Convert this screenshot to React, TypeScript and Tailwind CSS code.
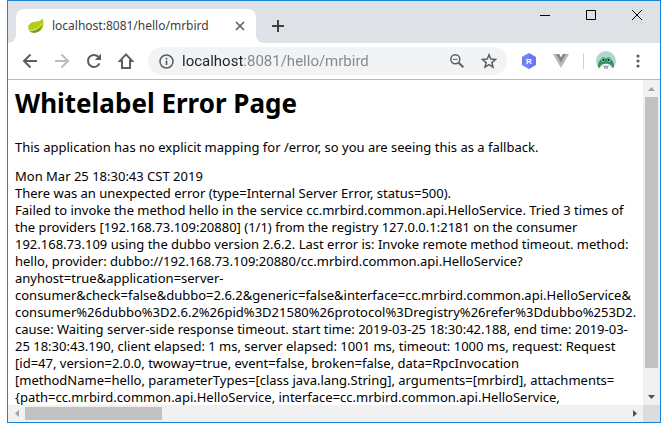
import React from "react";

const details = [
  "There was an unexpected error (type=Internal Server Error, status=500).",
  "Failed to invoke the method hello in the service cc.mrbird.common.api.HelloService. Tried 3 times of",
  "the providers [192.168.73.109:20880] (1/1) from the registry 127.0.0.1:2181 on the consumer",
  "192.168.73.109 using the dubbo version 2.6.2. Last error is: Invoke remote method timeout. method:",
  "hello, provider: dubbo://192.168.73.109:20880/cc.mrbird.common.api.HelloService?",
  "anyhost=true&application=server-",
  "consumer&check=false&dubbo=2.6.2&generic=false&interface=cc.mrbird.common.api.HelloService&",
  "consumer%26dubbo%3D2.6.2%26pid%3D21580%26protocol%3Dregistry%26refer%3Ddubbo%253D2.",
  "cause: Waiting server-side response timeout. start time: 2019-03-25 18:30:42.188, end time: 2019-03-",
  "25 18:30:43.190, client elapsed: 1 ms, server elapsed: 1001 ms, timeout: 1000 ms, request: Request",
  "[id=47, version=2.0.0, twoway=true, event=false, broken=false, data=RpcInvocation",
  "[methodName=hello, parameterTypes=[class java.lang.String], arguments=[mrbird], attachments=",
  "{path=cc.mrbird.common.api.HelloService, interface=cc.mrbird.common.api.HelloService,",
];

function IconButton({ label, className = "", children }: { label: string; className?: string; children: React.ReactNode }) {
  return (
    <button type="button" aria-label={label} className={`flex shrink-0 items-center justify-center ${className}`}>
      {children}
    </button>
  );
}

function Leaf() {
  return (
    <svg width="16" height="16" viewBox="0 0 16 16">
      <path d="M14.7 0.5c1.7 5.800.6 10.900-3.700 13-3.300 1.500-7.300 1.200-9.600-.3C-.9 9.800.1 5.800 4.300 4.300 8 3.200 12 4 14.700.5z" fill="#b5cc18" />
      <path d="M2 13.300c5-.5 9-2.300 12.300-7.300-.5 4.500-2.500 7.500-6 8.500-2.300.6-4.700.3-6.300-1.200z" fill="#6fa51d" />
      <path d="M1.500 12.700c5.500-.4 9.500-2.400 12.300-6.700" fill="none" stroke="#e3ec8c" strokeWidth="1" />
    </svg>
  );
}

function TabStrip() {
  return (
    <header className="flex h-[42px] shrink-0 items-end bg-[#dee1e6]">
      <svg width="8" height="8" viewBox="0 0 8 8" className="shrink-0">
        <path d="M8 0v8H0a8 8 0 0 0 8-8z" fill="#fff" />
      </svg>
      <div className="flex h-[34px] w-[240px] shrink-0 items-center rounded-t-lg bg-white pl-3 pr-2">
        <Leaf />
        <span className="ml-2 flex-1 whitespace-nowrap font-['Noto_Sans',sans-serif] text-xs text-[#3c4043]">localhost:8081/hello/mrbird</span>
        <IconButton label="Close tab" className="size-4">
          <svg width="10" height="10" viewBox="0 0 10 10"><path d="M1 1l8 8M9 1l-8 8" stroke="#5f6368" strokeWidth="1.7" /></svg>
        </IconButton>
      </div>
      <svg width="8" height="8" viewBox="0 0 8 8" className="shrink-0">
        <path d="M0 0v8h8a8 8 0 0 1-8-8z" fill="#fff" />
      </svg>
      <IconButton label="New tab" className="h-[34px] w-7">
        <svg width="12" height="12" viewBox="0 0 12 12"><path d="M6 0v12M0 6h12" stroke="#3c4043" strokeWidth="2" /></svg>
      </IconButton>
      <div className="ml-auto flex h-full items-start">
        <IconButton label="Minimize" className="h-7 w-[46px]">
          <svg width="10" height="10" viewBox="0 0 10 10"><path d="M0 5.500h10" stroke="#000" /></svg>
        </IconButton>
        <IconButton label="Maximize" className="h-7 w-[46px]">
          <svg width="10" height="10" viewBox="0 0 10 10"><path d="M.5.500h9v9h-9z" fill="none" stroke="#000" /></svg>
        </IconButton>
        <IconButton label="Close window" className="h-7 w-[46px]">
          <svg width="10" height="10" viewBox="0 0 10 10"><path d="M0 0l10 10M10 0L0 10" stroke="#000" /></svg>
        </IconButton>
      </div>
    </header>
  );
}

function Toolbar() {
  return (
    <nav className="flex h-[37px] shrink-0 items-center border-b border-[#b8b8b8] bg-white pl-1.5">
      <IconButton label="Back" className="size-8">
        <svg width="16" height="16" viewBox="0 0 16 16"><path d="M15 8H2.500M8.500 1.500L2 8l6.500 6.500" fill="none" stroke="#5a5e63" strokeWidth="2" /></svg>
      </IconButton>
      <IconButton label="Forward" className="size-8">
        <svg width="16" height="16" viewBox="0 0 16 16"><path d="M1 8h12.500M7.500 1.500L14 8l-6.500 6.500" fill="none" stroke="#babcbe" strokeWidth="2" /></svg>
      </IconButton>
      <IconButton label="Reload" className="size-8">
        <svg width="16" height="16" viewBox="0 0 16 16">
          <path d="M13.500 10.300A6 6 0 1 1 12.300 3.800" fill="none" stroke="#5a5e63" strokeWidth="2" />
          <path d="M15 .8V7H8.800z" fill="#5a5e63" />
        </svg>
      </IconButton>
      <IconButton label="Home" className="size-8">
        <svg width="16" height="16" viewBox="0 0 16 16"><path d="M8 1.400L1.800 8H4v7h8V8h2.200z" fill="none" stroke="#5a5e63" strokeWidth="2" /></svg>
      </IconButton>
      <div className="ml-1.5 flex h-7 min-w-0 flex-1 items-center rounded-full bg-[#f1f3f4] pl-[11px] pr-1.5">
        <svg width="15" height="15" viewBox="0 0 15 15" className="shrink-0">
          <circle cx="7.500" cy="7.500" r="6.500" fill="none" stroke="#5a5e63" strokeWidth="1.500" />
          <path d="M7.500 6.500V11M7.500 3.700v1.700" stroke="#5a5e63" strokeWidth="1.700" />
        </svg>
        <input
          type="text"
          aria-label="Address"
          defaultValue="localhost:8081/hello/mrbird"
          className="ml-2 min-w-0 flex-1 bg-[linear-gradient(to_right,#202124_61px,#80868b_61px)] bg-clip-text font-['Roboto',sans-serif] text-[15px] leading-5 text-transparent outline-none"
        />
        <IconButton label="Zoom" className="size-6">
          <svg width="14" height="14" viewBox="0 0 14 14"><circle cx="5.300" cy="5.300" r="4.500" fill="none" stroke="#5a5e63" strokeWidth="1.500" /><path d="M8.700 8.700l4.600 4.600" stroke="#5a5e63" strokeWidth="2" /><path d="M3 5.300h4.600" stroke="#5a5e63" /></svg>
        </IconButton>
        <IconButton label="Bookmark this page" className="ml-2 size-6">
          <svg width="16" height="16" viewBox="0 0 16 16"><path d="M8 1.800l1.800 4.300 4.700.4-3.600 3.100 1.100 4.600L8 11.700l-4 2.500 1.100-4.600L1.500 6.500l4.700-.4z" fill="none" stroke="#5a5e63" strokeWidth="1.500" /></svg>
        </IconButton>
      </div>
      <IconButton label="R extension" className="ml-1.5 size-8">
        <svg width="16" height="16" viewBox="0 0 16 16">
          <path d="M8 0l7 4v8l-7 4-7-4V4z" fill="#6c78ed" />
          <path d="M8 0L1 4l3 4-3 4 7 4V8z" fill="#858eff" opacity=".6" />
          <text x="8" y="11" textAnchor="middle" fontFamily="Liberation Sans" fontWeight="700" fontSize="8" fill="#fff">R</text>
        </svg>
      </IconButton>
      <IconButton label="Vue extension" className="size-8">
        <svg width="16" height="14" viewBox="0 0 16 14"><path d="M0 0h16L8 14z" fill="#b8b8b8" /><path d="M3.200 0h3L8 3.200 9.800 0h3L8 8.500z" fill="#858585" /><path d="M6.200 0h3.600L8 3.200z" fill="#fff" /></svg>
      </IconButton>
      <span className="ml-1.5 h-4 w-px bg-[#cfd1d4]" />
      <IconButton label="Profile" className="ml-1.5 size-8">
        <svg width="20" height="20" viewBox="0 0 20 20">
          <circle cx="10" cy="10" r="10" fill="#aed8ce" />
          <path d="M2 16C2 11 4 9.500 5 8c1-2.200 4-2.200 5 0 1-2.200 4-2.200 5 0 1 1.500 3 3 3 8l-3 2H5z" fill="#24965e" />
          <path d="M3.500 17.500c0-6.500 13-6.500 13 0A10 10 0 0 1 3.500 17.500z" fill="#fff" />
          <circle cx="7.200" cy="9" r="1.800" fill="#e4f2e9" /><circle cx="12.800" cy="9" r="1.800" fill="#e4f2e9" />
          <circle cx="7.400" cy="9" r="1.200" fill="#16251e" /><circle cx="12.600" cy="9" r="1.200" fill="#16251e" />
          <circle cx="4.500" cy="15" r="1" fill="#f47c48" /><circle cx="15.500" cy="15" r="1" fill="#f47c48" />
          <path d="M7.500 14.500l1 1.300 1.500-1 1.500 1 1-1.300M8 17h4" fill="none" stroke="#344b68" strokeWidth=".8" />
        </svg>
      </IconButton>
      <IconButton label="Menu" className="mr-1.5 size-8">
        <svg width="4" height="14" viewBox="0 0 4 14" fill="#5a5e63"><circle cx="2" cy="2" r="1.600" /><circle cx="2" cy="7" r="1.600" /><circle cx="2" cy="12" r="1.600" /></svg>
      </IconButton>
    </nav>
  );
}

export default function App() {
  return (
    <div className="h-screen bg-white px-[7px] pb-[7px]">
      <div className="flex h-full flex-col border border-[#1883d7]">
        <TabStrip />
        <Toolbar />
        <div className="flex min-h-0 flex-1">
          <main className="min-w-0 flex-1 overflow-hidden whitespace-nowrap pl-[7px] pt-[5px] font-['Noto_Sans',sans-serif] text-[13px] leading-[17px] text-black">
            <h1 className="text-[26px] font-bold leading-9">Whitelabel Error Page</h1>
            <p className="mt-[18px]">This application has no explicit mapping for /error, so you are seeing this as a fallback.</p>
            <div className="mt-3">Mon Mar 25 18:30:43 CST 2019</div>
            {details.map((line) => (
              <div key={line}>{line}</div>
            ))}
          </main>
          <div className="flex w-[17px] shrink-0 flex-col items-center bg-[#f1f1f1]">
            <IconButton label="Scroll up" className="h-[17px] w-full">
              <svg width="7" height="4" viewBox="0 0 7 4"><path d="M0 4l3.500-4L7 4z" fill="#a3a3a3" /></svg>
            </IconButton>
            <div className="mb-5 w-[13px] flex-1 bg-[#c1c1c1]" />
            <IconButton label="Scroll down" className="h-[17px] w-full">
              <svg width="7" height="4" viewBox="0 0 7 4"><path d="M0 0l3.500 4L7 0z" fill="#505050" /></svg>
            </IconButton>
          </div>
        </div>
        <div className="flex h-[17px] shrink-0 items-center bg-[#f1f1f1]">
          <IconButton label="Scroll left" className="size-[17px]">
            <svg width="4" height="7" viewBox="0 0 4 7"><path d="M4 0L0 3.500 4 7z" fill="#a3a3a3" /></svg>
          </IconButton>
          <div className="h-[13px] w-[137px] bg-[#c1c1c1]" />
          <IconButton label="Scroll right" className="ml-auto size-[17px]">
            <svg width="4" height="7" viewBox="0 0 4 7"><path d="M0 0l4 3.500L0 7z" fill="#505050" /></svg>
          </IconButton>
          <div className="size-[17px] bg-[#dcdcdc]" />
        </div>
      </div>
    </div>
  );
}
